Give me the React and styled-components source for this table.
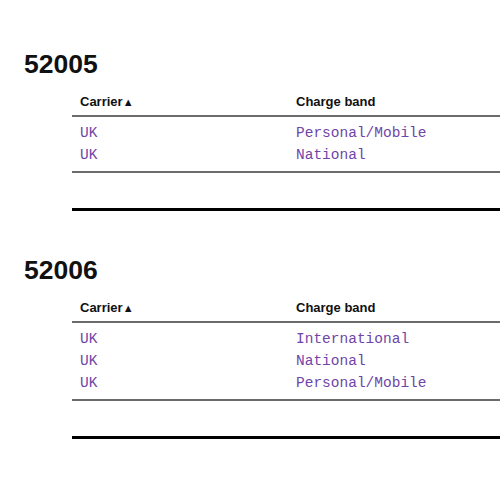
import React from 'react';
import styled, { createGlobalStyle } from 'styled-components';

const Global = createGlobalStyle`
html, body {
    margin: 0;
    padding: 0;
    background: #fff;
    overflow: hidden;
}
body {
    font-family: "Liberation Sans", Arial, sans-serif;
    color: #111;
}
`;

const numbers = [
    { id: '52005', rows: [['UK', 'Personal/Mobile'], ['UK', 'National']] },
    { id: '52006', rows: [['UK', 'International'], ['UK', 'National'], ['UK', 'Personal/Mobile']] },
];

const App = () => {
    return (
        <Page>
            <Global />
            {numbers.map(n => (
                <Section key={n.id}>
                    <Heading>{n.id}</Heading>
                    <Table>
                        <HeadRow>
                            <HeadCell>Carrier<Arrow>▲</Arrow></HeadCell>
                            <HeadCell>Charge band</HeadCell>
                        </HeadRow>
                        <Body>
                            {n.rows.map((r, i) => (
                                <Row key={i}>
                                    <Cell>{r[0]}</Cell>
                                    <Cell>{r[1]}</Cell>
                                </Row>
                            ))}
                        </Body>
                    </Table>
                    <Rule />
                </Section>
            ))}
        </Page>
    )
};

export default App;

const Page = styled.div`
width: 500px;
height: 500px;
overflow: hidden;
padding: 0 0 0 24px;
box-sizing: border-box;
`;

const Section = styled.section`
padding-top: 49px;
& + & {
    padding-top: 44px;
}
`;

const Heading = styled.h2`
margin: 0;
font-size: 26.5px;
line-height: 30px;
font-weight: 700;
color: #111;
`;

const Table = styled.div`
margin: 15px 0 0 48px;
width: 560px;
border-bottom: 2px solid #6b6b6b;
`;

const HeadRow = styled.div`
display: grid;
grid-template-columns: 216px 1fr;
padding-bottom: 5px;
border-bottom: 2px solid #6b6b6b;
`;

const HeadCell = styled.div`
padding-left: 8px;
font-size: 13px;
line-height: 16px;
font-weight: 700;
color: #111;
`;

const Arrow = styled.span`
font-size: 11px;
`;

const Body = styled.div`
padding: 5px 0 5px;
`;

const Row = styled.div`
display: grid;
grid-template-columns: 216px 1fr;
`;

const Cell = styled.div`
padding-left: 8px;
font-family: "Liberation Mono", "Courier New", monospace;
font-size: 14.5px;
line-height: 22px;
color: #6f45a8;
`;

const Rule = styled.div`
margin: 35px 0 0 48px;
width: 560px;
height: 3px;
background: #000;
`;
